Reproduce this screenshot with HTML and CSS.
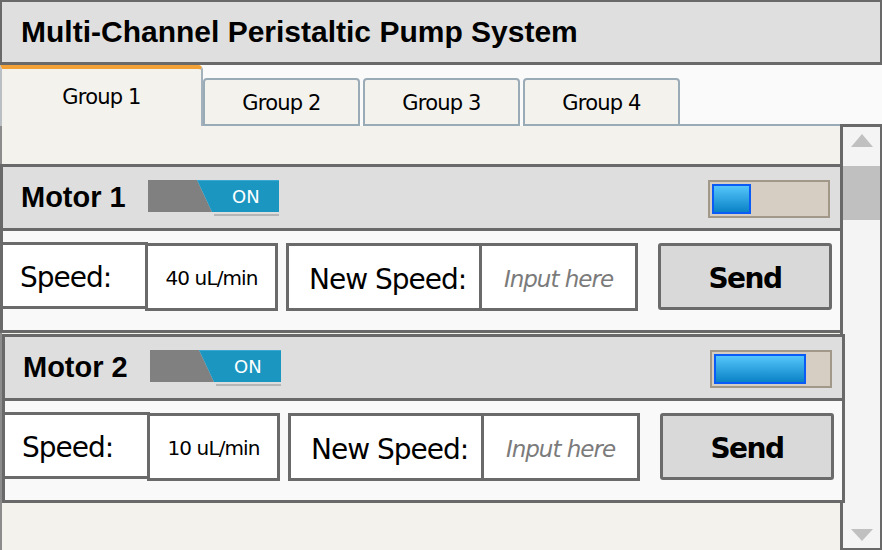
FILE: index.html
```html
<!DOCTYPE html>
<html>
<head>
<meta charset="utf-8">
<title>Multi-Channel Peristaltic Pump System</title>
<link rel="stylesheet" href="styles.css">
</head>
<body>
<div class="app">
  <header class="titlebar"><h1 class="title">Multi-Channel Peristaltic Pump System</h1></header>
  <nav class="tabs">
    <div class="tab active">Group 1</div>
    <div class="tab">Group 2</div>
    <div class="tab gap">Group 3</div>
    <div class="tab gap">Group 4</div>
    <div class="tab-fill"></div>
  </nav>
  <div class="content">
    <main class="pane">
      <section class="motor first">
        <div class="motor-head">
          <span class="motor-name">Motor 1</span>
          <div class="switch">
            <svg class="switch-bg" width="131" height="36" viewBox="0 0 131 36">
              <polygon points="0,0 49,0 64,32 0,32" fill="#808080"/>
              <polygon points="49,0 131,0 131,32 64,32" fill="#1a96c1"/>
              <rect x="49" y="0" width="82" height="1" fill="#3aa8d0"/>
              <rect x="66" y="34" width="65" height="2" fill="#b5b5b5"/>
            </svg>
            <span class="switch-label">ON</span>
          </div>
          <div class="meter"><div class="meter-fill" style="width:39px"></div></div>
        </div>
        <div class="motor-body">
          <div class="label-box">Speed:</div>
          <div class="value-box">40 uL/min</div>
          <div class="label-box wide">New Speed:</div>
          <div class="input-box">Input here</div>
          <button class="send">Send</button>
        </div>
      </section>
      <section class="motor second">
        <div class="motor-head">
          <span class="motor-name">Motor 2</span>
          <div class="switch">
            <svg class="switch-bg" width="131" height="36" viewBox="0 0 131 36">
              <polygon points="0,0 49,0 64,32 0,32" fill="#808080"/>
              <polygon points="49,0 131,0 131,32 64,32" fill="#1a96c1"/>
              <rect x="49" y="0" width="82" height="1" fill="#3aa8d0"/>
              <rect x="66" y="34" width="65" height="2" fill="#b5b5b5"/>
            </svg>
            <span class="switch-label">ON</span>
          </div>
          <div class="meter"><div class="meter-fill" style="width:92px"></div></div>
        </div>
        <div class="motor-body">
          <div class="label-box">Speed:</div>
          <div class="value-box">10 uL/min</div>
          <div class="label-box wide">New Speed:</div>
          <div class="input-box">Input here</div>
          <button class="send">Send</button>
        </div>
      </section>
    </main>
    <aside class="scrollbar">
      <div class="arrow-up"></div>
      <div class="thumb"></div>
      <div class="track"></div>
      <div class="arrow-down"></div>
    </aside>
  </div>
</div>
</body>
</html>
```
FILE: styles.css
```css
* { box-sizing: border-box; }

html, body {
  margin: 0;
  padding: 0;
}

body {
  width: 882px;
  height: 550px;
  overflow: hidden;
  background: #fafafa;
  font-family: "DejaVu Sans", Verdana, sans-serif;
  color: #000;
}

.app {
  display: flex;
  flex-direction: column;
  width: 882px;
  height: 550px;
}

/* Title bar */
.titlebar {
  height: 65px;
  background: #dfdfdf;
  border: 2px solid #696969;
  border-bottom-width: 3px;
  display: flex;
  align-items: center;
  padding-left: 19px;
}

.title {
  margin: 0;
  font-family: "Liberation Sans", Arial, sans-serif;
  font-weight: bold;
  font-size: 30px;
  line-height: 1;
  color: #000;
}

/* Tabs */
.tabs {
  height: 61px;
  display: flex;
  align-items: flex-end;
  background: #fafafa;
}

.tab {
  width: 157px;
  height: 48px;
  background: #f3f2ed;
  border: 2px solid #9aabb8;
  border-radius: 4px 4px 0 0;
  display: flex;
  align-items: center;
  justify-content: center;
  font-size: 21px;
  letter-spacing: -0.8px;
  padding-top: 1px;
}

.tab.gap { margin-left: 3px; }

.tab.active {
  width: 203px;
  height: 61px;
  border: none;
  border-top: 4px solid #f1a136;
  border-right: 2px solid #a2b1bc;
  border-left: 2px solid #b9bfc2;
  border-radius: 0 5px 0 0;
  padding-top: 0;
  padding-bottom: 2px;
}

.tab-fill {
  flex: 1;
  align-self: stretch;
  border-bottom: 2px solid #9aabb8;
}

/* Content area */
.content {
  flex: 1;
  display: flex;
  min-height: 0;
}

.pane {
  width: 840px;
  flex: none;
  background: #f3f2ed;
  box-shadow: inset 2px 0 #8c8c8c;
  padding-top: 38px;
}

.motor {
  position: relative;
  z-index: 1;
  width: 843px;
  height: 169px;
  border: 3px solid #696969;
  display: flex;
  flex-direction: column;
}

.motor.second {
  margin-left: 2px;
  margin-top: 1px;
}

.motor-head {
  height: 64px;
  flex: none;
  background: #dedede;
  border-bottom: 3px solid #696969;
  display: flex;
  align-items: center;
  padding: 0 10px 0 18px;
}

.motor-name {
  width: 127px;
  flex: none;
  font-family: "Liberation Sans", Arial, sans-serif;
  font-weight: bold;
  font-size: 29px;
  line-height: 1;
}

.switch {
  position: relative;
  width: 131px;
  height: 36px;
  flex: none;
}

.switch-bg {
  position: absolute;
  left: 0;
  top: 0;
  display: block;
}

.switch-label {
  position: relative;
  display: block;
  padding-left: 84px;
  line-height: 33px;
  font-size: 18px;
  color: #fff;
}

.meter {
  margin-left: auto;
  margin-top: 3px;
  width: 122px;
  height: 38px;
  border: 2px solid #a2988a;
  background: #d6cec2;
  padding: 2px;
}

.meter-fill {
  height: 100%;
  border: 2px solid #0b5cf6;
  background: linear-gradient(#55c6fb, #0a82c6);
}

.motor-body {
  flex: 1;
  background: #f9f9f9;
  display: flex;
  align-items: flex-start;
  padding-top: 11px;
}

.label-box,
.value-box,
.input-box {
  border: 3px solid #6a6a6a;
  background: #fff;
  display: flex;
  align-items: center;
  flex: none;
}

.label-box {
  margin-left: -3px;
  width: 148px;
  height: 67px;
  padding-left: 17px;
  padding-top: 4px;
  font-size: 28px;
  letter-spacing: -1px;
}

.label-box.wide {
  margin-left: 8px;
  margin-top: 1px;
  width: 196px;
  height: 68px;
  padding-left: 20px;
}

.value-box {
  margin-left: -3px;
  margin-top: 1px;
  width: 133px;
  height: 68px;
  justify-content: center;
  padding-top: 2px;
  font-size: 20px;
  letter-spacing: -0.9px;
}

.input-box {
  margin-left: -3px;
  margin-top: 1px;
  width: 159px;
  height: 68px;
  justify-content: center;
  padding-top: 3px;
  font-size: 23px;
  letter-spacing: -1px;
  font-style: italic;
  color: #7b7b7b;
}

.send {
  margin-left: 20px;
  margin-top: 1px;
  width: 174px;
  height: 67px;
  border: 3px solid #6b6b6b;
  border-radius: 3px;
  background: #d9d9d9;
  font-family: "DejaVu Sans", Verdana, sans-serif;
  font-weight: bold;
  font-size: 28px;
  letter-spacing: -1.5px;
  color: #000;
  padding: 3px 0 0;
}

/* Scrollbar */
.scrollbar {
  width: 42px;
  flex: none;
  margin-top: -2px;
  height: 426px;
  background: #f4f4f4;
  border: 3px solid #696969;
  border-right-width: 2px;
  border-bottom-width: 2px;
  display: flex;
  flex-direction: column;
  align-items: center;
}

.arrow-up {
  margin-top: 7px;
  width: 0;
  height: 0;
  border-left: 11px solid transparent;
  border-right: 11px solid transparent;
  border-bottom: 13px solid #c0c0c0;
}

.thumb {
  margin-top: 19px;
  width: 100%;
  height: 54px;
  background: #c0c0c0;
}

.track {
  flex: 1;
}

.arrow-down {
  margin-bottom: 7px;
  width: 0;
  height: 0;
  border-left: 11px solid transparent;
  border-right: 11px solid transparent;
  border-top: 12px solid #c0c0c0;
}
```
